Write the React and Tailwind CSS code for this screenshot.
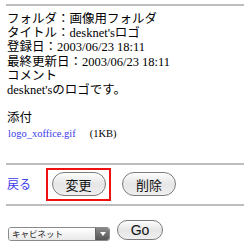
import React from 'react';

const serif = "font-['Liberation_Serif','Noto_Sans_CJK_JP',serif]";
const gothic = "font-['Noto_Sans_CJK_JP',sans-serif]";

function PillButton({ children, className = '' }) {
    return (
        <button
            className={`h-[24px] w-[54px] rounded-full border border-[#7c7c7c] bg-linear-to-b from-[#fdfdfd] via-[#e6e6e6] to-[#efefef] text-[13px] leading-none text-[#111] flex items-center justify-center ${gothic} ${className}`}
        >
            {children}
        </button>
    );
}

export default function App() {
    const details = [
        'フォルダ：画像用フォルダ',
        "タイトル：desknet'sロゴ",
        '登録日：2003/06/23 18:11',
        '最終更新日：2003/06/23 18:11',
        'コメント',
        "desknet'sのロゴです。",
    ];

    return (
        <div className={`w-[250px] h-[250px] overflow-hidden bg-white px-[6px] pt-[4px] ${serif}`}>
            <div className="h-[2px] bg-[#bdbdbd]"></div>

            {/* Detail text */}
            <div className="mt-[6px] pl-[1px] text-[12.5px] leading-[14.2px] text-black">
                {details.map((line) => (
                    <div key={line} className="whitespace-nowrap">{line}</div>
                ))}
                <div className="h-[14.2px]"></div>
                <div>添付</div>
            </div>

            {/* Attachment */}
            <div className="h-[16px] flex items-center pl-[2px] text-[10.5px]">
                <a href="#" className="text-[#3b3bea]">logo_xoffice.gif</a>
                <span className="ml-[14px] text-black">(1KB)</span>
            </div>

            <div className="mt-[21px] h-[2px] bg-[#bdbdbd]"></div>

            {/* Actions */}
            <div className="mt-[3px] h-[33px] flex items-center pl-[1px]">
                <a href="#" className={`text-[12px] text-[#3b3bea] ${gothic}`}>戻る</a>
                <div className="ml-[15px] w-[65px] h-[33px] border-2 border-[#f01010] flex items-center justify-center">
                    <PillButton>変更</PillButton>
                </div>
                <PillButton className="ml-[11px]">削除</PillButton>
            </div>

            <div className="mt-[3px] h-[2px] bg-[#bdbdbd]"></div>

            {/* Jump */}
            <div className="mt-[14px] flex items-end pl-[2px]">
                <div className="mb-[-1px] w-[102px] h-[14px] flex rounded-[3px] border border-[#8a8a8a] overflow-hidden">
                    <div className={`flex-1 flex items-center pl-[3px] bg-linear-to-b from-white to-[#e9e9e9] text-[8.5px] leading-none text-[#222] ${gothic}`}>
                        キャビネット
                    </div>
                    <div className="w-[14px] flex items-center justify-center bg-linear-to-b from-[#8a8a8a] to-[#555] border-l border-[#666]">
                        <svg width="6" height="4" viewBox="0 0 6 4">
                            <path d="M0 0H6L3 4Z" fill="#fff" />
                        </svg>
                    </div>
                </div>
                <button className="ml-[7px] h-[20px] w-[46px] rounded-full border border-[#7c7c7c] bg-linear-to-b from-[#fdfdfd] via-[#e6e6e6] to-[#efefef] font-['Liberation_Sans',sans-serif] text-[14px] leading-none text-[#111] flex items-center justify-center">
                    Go
                </button>
            </div>
        </div>
    );
}
